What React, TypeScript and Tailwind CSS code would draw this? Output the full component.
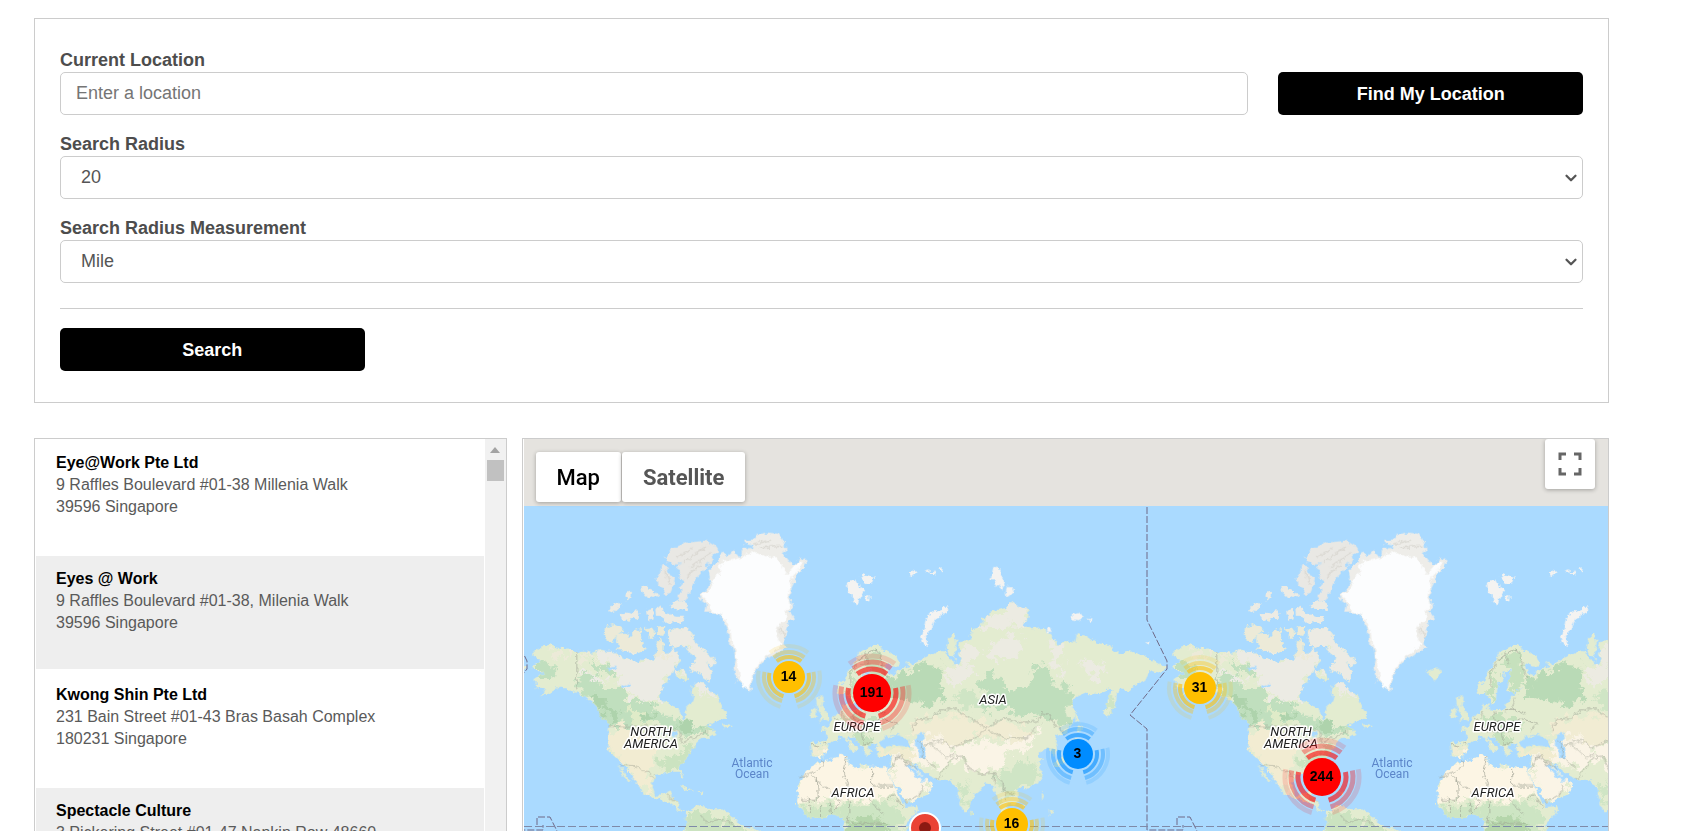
import { ChevronDown } from 'lucide-react'

type Patch = { dx?: number; dy?: number; d: string; fill?: string }

const stores = [
  { name: 'Eye@Work Pte Ltd', street: '9 Raffles Boulevard #01-38 Millenia Walk', city: '39596 Singapore' },
  { name: 'Eyes @ Work', street: '9 Raffles Boulevard #01-38, Milenia Walk', city: '39596 Singapore' },
  { name: 'Kwong Shin Pte Ltd', street: '231 Bain Street #01-43 Bras Basah Complex', city: '180231 Singapore' },
  { name: 'Spectacle Culture', street: '3 Pickering Street #01-47 Nankin Row 48660' },
]

const clusters = [
  { count: 14, x: 265, y: 238, color: '#ffbf00', r: 16, rings: [20, 25, 31], band: 4 },
  { count: 191, x: 348, y: 254, color: '#ff0000', r: 19, rings: [24, 31, 37], band: 5 },
  { count: 3, x: 554, y: 315, color: '#008cff', r: 15, rings: [19, 25, 30], band: 4 },
  { count: 16, x: 488, y: 385, color: '#ffbf00', r: 16, rings: [20, 25, 31], band: 4 },
  { count: 31, x: 676, y: 249, color: '#ffbf00', r: 16, rings: [20, 25, 31], band: 4 },
  { count: 244, x: 798, y: 338, color: '#ff0000', r: 19, rings: [24, 31, 37], band: 5 },
]

// Eurasia is plotted on its own grid, Europe and Africa on another
const EAST = { dx: 900, dy: 210 }
const EURO = { dx: 660, dy: 0 }

const land: Patch[] = [
  // North America
  { d: 'M45 660 62 648 90 640 112 650 140 652 165 662 190 660 215 668 240 655 262 662 285 668 305 682 330 688 355 690 375 685 400 690 425 688 440 680 448 665 460 650 470 668 480 690 470 700 462 715 455 730 440 738 450 745 435 755 425 770 420 790 422 808 438 815 455 822 475 830 482 850 490 866 500 850 498 830 515 815 520 800 515 785 518 765 530 755 550 758 560 770 572 785 590 790 600 815 610 835 622 850 610 862 590 870 575 880 560 884 580 895 590 910 570 920 548 920 535 930 520 945 515 960 505 968 498 985 480 1000 475 1012 482 1020 490 1035 494 1045 486 1042 475 1022 455 1022 440 1028 420 1025 405 1035 400 1055 398 1072 405 1090 415 1095 430 1092 440 1085 455 1078 450 1095 458 1100 470 1108 478 1118 480 1135 490 1145 505 1140 515 1135 530 1125 545 1128 570 1135 600 1135 625 1150 650 1165 660 1180 690 1190 720 1200 740 1230 480 1230 500 1180 498 1160 500 1147 485 1145 470 1130 450 1115 430 1108 415 1102 395 1100 370 1088 362 1070 355 1055 340 1040 325 1020 310 1005 300 990 285 975 270 965 265 945 262 920 265 900 270 880 255 870 240 850 230 830 215 812 195 795 180 790 160 780 145 775 125 775 110 765 100 778 80 790 60 800 70 790 78 775 50 772 50 755 40 745 55 735 75 730 60 722 40 715 35 700 60 695 50 680 35 670z' },
  { d: 'M295 1003 310 1018 335 1055 325 1050 305 1025z M598 850 615 844 620 862 600 868z M610 880 635 885 620 898z M478 1062 500 1068 522 1080 500 1076z M530 1079 550 1082 545 1088z' },
  // Arctic archipelago
  { d: 'M260 585 280 580 300 590 310 600 290 612 275 632 258 628 255 605z M290 610 320 605 330 620 345 600 365 595 362 620 370 650 380 655 355 665 340 670 325 660 310 658 290 655 300 640 285 628z M378 592 395 590 405 605 398 625 385 615z M412 590 435 588 432 605 425 615 412 608z M405 690 410 650 418 620 430 640 430 660 445 675 430 692z M465 720 485 712 500 730 508 750 490 748 470 742z' },
  { d: 'M445 600 460 592 480 598 500 590 515 610 520 630 545 650 560 665 585 685 580 710 570 700 560 695 575 720 575 740 570 752 545 735 530 720 515 722 510 705 525 695 530 680 510 665 500 645 480 645 465 650 450 640 445 620z' },
  { fill: '#ebeadf', d: 'M365 465 380 465 388 480 405 485 415 498 395 492 380 500 368 485z M320 488 335 482 333 500 322 510z M268 540 280 522 295 513 303 525 290 535 280 545z M300 548 320 545 335 550 345 535 358 548 352 565 335 560 325 572 310 565z M382 538 400 533 400 565 386 568z M410 528 430 535 440 548 465 555 490 555 495 568 475 575 445 572 430 565 412 555z M450 520 470 512 490 510 505 522 500 540 480 535 455 532z' },
  // Iceland, British Isles
  { ...EURO, d: 'M137 715 150 720 165 712 185 715 185 730 165 745 148 738 150 728z M230 800 248 800 245 825 262 850 265 865 238 874 245 850 235 835z M210 840 228 828 230 850 213 862z' },
  // Africa
  { ...EURO, d: 'M235 990 265 990 300 972 322 975 320 995 340 1010 355 1015 360 1000 390 1005 440 1010 448 1035 465 1070 480 1100 495 1128 535 1125 525 1150 500 1180 490 1230 315 1230 310 1160 280 1150 250 1160 220 1160 190 1145 170 1115 175 1095 172 1070 190 1035 215 1010z' },
  // Eurasia
  { ...EAST, d: 'M-25 765-28 725 5 722 20 715 18 690 0 685 22 675 35 660 50 640 65 630 70 605 82 610 85 625 105 628 135 625 135 612 155 590 165 580 190 560 160 575 140 565 145 535 152 525 155 505 135 515 130 535 115 550 110 580 105 605 92 615 85 585 78 580 55 585 50 560 70 540 85 510 100 490 115 455 135 445 155 435 175 435 200 450 230 470 240 490 220 500 195 485 205 515 225 525 225 510 250 500 265 495 260 480 280 490 305 475 330 462 345 455 370 450 385 465 400 490 410 490 402 465 385 455 380 440 390 405 405 400 410 430 405 460 412 495 425 480 415 450 420 420 435 415 450 420 455 385 480 380 485 355 520 330 560 320 575 300 595 315 625 325 625 350 605 375 640 385 670 380 690 400 715 430 735 420 765 425 770 400 800 405 830 425 870 435 880 450 900 460 925 450 960 460 985 470 1010 485 1040 500 1020 515 1000 510 985 520 975 540 945 555 925 570 900 565 890 580 888 610 865 650 852 640 860 600 880 565 870 560 840 580 800 575 765 590 755 605 765 640 760 660 735 700 712 700 705 720 712 750 702 768 690 740 670 745 655 760 668 775 655 795 668 820 655 845 620 862 595 860 590 870 597 895 585 915 565 905 560 930 575 960 580 1000 560 1000 545 950 540 920 530 880 520 855 495 850 480 870 455 890 448 920 435 935 420 905 412 870 405 850 385 838 355 835 330 825 300 800 275 785 285 805 300 820 320 835 342 855 320 880 275 905 255 903 240 870 215 835 205 810 210 790 215 765 180 765 165 745 175 735 150 730 145 740 150 758 138 768 130 740 110 720 90 705 80 712 105 735 112 742 100 755 85 725 65 705 52 708 48 718 30 725 25 745 10 765 0 775z' },
  { ...EAST, d: 'M765 633 772 640 775 665 766 655z M775 672 790 680 780 692 770 688z M755 740 765 710 775 712 765 755 735 785 705 800 700 790z M450 928 458 938 452 946z M665 870 672 885 666 900z M685 922 698 935 690 945z M600 912 612 912 606 922z' },
]

const ice: Patch[] = [
  // Ellesmere Island and Greenland
  { fill: '#e9e8e4', d: 'M435 378 455 355 480 345 500 335 530 332 560 330 585 345 595 360 580 375 565 400 550 420 530 440 520 460 510 480 500 505 480 510 470 495 485 485 480 465 490 450 475 440 480 420 465 410 485 400 460 400 440 392z M425 400 440 410 450 430 465 440 460 465 450 488 435 488 430 470 412 460 410 440 420 425z' },
  { fill: '#eeede9', d: 'M535 490 555 480 560 470 575 460 570 440 565 420 580 405 590 398 595 380 610 365 625 375 640 360 655 380 665 365 670 350 690 355 705 345 680 340 675 330 700 325 710 310 740 305 775 308 795 335 800 360 785 370 800 380 815 400 835 395 840 380 860 388 850 410 830 425 825 450 815 470 808 490 815 520 822 527 808 540 825 565 805 575 800 600 790 640 803 648 780 660 750 680 730 690 715 710 700 730 695 760 690 782 672 770 655 755 645 730 640 705 645 680 640 650 628 640 625 610 622 590 610 570 600 550 580 545 555 545 560 520 545 510z' },
  { fill: '#fcfdfe', d: 'M540 490 565 482 580 460 575 445 600 430 600 395 640 385 665 380 695 360 720 372 745 380 770 378 790 410 800 430 825 400 845 395 835 415 815 440 810 470 803 490 812 520 800 540 798 570 772 585 770 615 785 640 765 655 745 675 725 690 700 720 690 760 685 775 665 765 655 730 650 690 645 650 635 635 632 600 615 565 600 548 570 540 565 515z' },
  { ...EURO, fill: '#f4f3f1', d: 'M320 455 345 445 355 465 372 478 360 495 352 525 340 510 338 490 325 485z M358 440 370 430 405 440 400 452 380 460 365 450z M375 495 388 492 388 508 377 508z M508 430 525 416 532 425 515 434z M553 420 567 415 570 422z M570 425 585 418 582 432z M596 415 608 408 606 425z M628 525 620 540 595 555 580 575 568 600 558 615 562 645 548 640 540 620 552 590 558 565 575 545 600 535z' },
  { ...EAST, fill: '#f4f3f1', d: 'M518 205 530 193 542 210 540 225 550 235 555 250 545 265 530 250 525 235 512 235z M560 258 575 258 582 270 565 287 557 280z M755 340 775 333 795 348 775 358 757 355z M803 350 822 355 808 360z M976 424 992 425 988 433 978 432z M680 385 690 380 695 395 685 396z' },
]

const terrain: Patch[] = [
  // tundra
  { fill: '#ecebe4', d: 'M235 655 300 660 370 680 480 640 475 720 430 760 420 820 370 815 340 790 310 770 290 730 260 700z M500 700 560 740 585 790 560 800 520 770z M430 570 520 580 600 690 580 770 520 730 500 650 430 655z M180 720 235 725 262 755 245 770 210 760z M250 450 520 450 520 590 250 590z' },
  { fill: '#ecead8', d: 'M240 570 440 570 440 680 300 665 240 640z M150 655 195 655 240 690 215 690z M100 655 150 665 135 680 90 680z' },
  // boreal forest
  { fill: '#c0dfbe', d: 'M170 735 205 725 215 760 260 775 300 765 330 800 380 815 430 845 480 875 540 880 580 885 585 905 540 900 500 920 460 900 430 880 380 885 330 880 300 905 270 885 235 850 215 800 180 780z M55 700 95 690 110 720 90 745 50 740z M205 700 265 705 280 735 230 725z' },
  { fill: '#aed3ac', d: 'M215 790 250 800 300 850 290 880 265 860 240 845z M360 835 400 845 400 865 370 860z M470 880 540 885 530 900 490 900z' },
  { fill: '#dfebc8', d: 'M320 840 360 835 370 875 400 880 410 900 330 890z' },
  // western plains and Mexico
  { fill: '#f2ecd2', d: 'M275 890 330 890 400 905 415 950 400 1000 385 1030 392 1085 370 1080 340 1030 300 985 268 950z' },
  { fill: '#cbe3c0', d: 'M425 985 460 985 495 950 530 930 520 960 490 1000 460 1015 420 1015z M500 1150 540 1140 580 1160 640 1165 700 1230 490 1230z' },
  // Russia
  { ...EAST, fill: '#ecebe2', d: 'M480 370 560 320 580 300 630 330 620 370 560 375 500 390z M560 400 610 410 605 450 560 475 520 480 500 450z M690 400 730 440 720 490 740 540 700 500z M420 440 470 430 480 460 430 500z M370 500 440 490 460 520 400 560z M780 480 830 470 860 510 820 540z' },
  { ...EAST, fill: '#b9dab6', d: 'M215 530 245 515 300 495 330 500 350 490 370 520 365 560 380 580 340 610 325 635 300 600 270 605 230 600 190 590 200 560z' },
  { ...EAST, fill: '#bfdebc', d: 'M480 530 520 520 545 535 560 570 610 560 640 520 680 490 690 540 720 560 750 560 760 590 740 620 750 660 720 680 690 650 640 640 600 650 560 620 500 630 470 600 500 580z M640 500 670 480 690 520 650 540z M590 590 640 585 630 640 590 640z' },
  { ...EAST, fill: '#cfe5c5', d: 'M400 590 470 580 480 620 430 630z M850 600 880 580 880 620 862 645z M540 800 640 780 665 810 650 850 600 865 560 900 530 850z M410 850 440 840 450 900 435 930z' },
  // central Asian steppe and plateau
  { ...EAST, fill: '#f1ecd3', d: 'M270 690 290 660 350 650 400 640 450 650 510 670 560 660 640 690 600 730 540 710 470 700 420 740 400 760 300 720z' },
  { ...EAST, fill: '#faf4e6', d: 'M290 720 360 700 400 740 440 730 520 720 600 720 660 680 650 720 600 750 540 760 550 800 500 820 440 800 400 760 380 800 350 800 300 790 270 760z M215 770 260 770 280 800 320 840 340 855 275 900 240 860z' },
  { ...EAST, fill: '#f1ecd0', d: 'M160 740 215 735 280 750 270 775 200 765z' },
  // Scandinavia and the rest of Europe
  { ...EURO, fill: '#c6e1bd', d: 'M375 665 410 660 430 700 430 760 395 785 375 770 395 710 370 700z M325 740 350 730 352 790 335 825 325 790z M300 855 380 850 430 880 380 900 320 880z M330 900 390 905 385 960 360 930z' },
  { ...EURO, fill: '#f0ecd2', d: 'M225 940 255 945 250 975 225 975z' },
  // Sahara
  { ...EURO, fill: '#fcf5e4', d: 'M150 1110 180 1020 250 970 330 955 345 1000 450 990 495 1100 440 1095 380 1110 300 1115 230 1110z' },
  { ...EURO, fill: '#cde5c3', d: 'M170 1125 230 1125 300 1125 370 1120 440 1110 480 1140 500 1175 470 1230 315 1230 310 1155 200 1160z' },
  { ...EURO, fill: '#b5d6ab', d: 'M340 1165 400 1160 440 1180 430 1230 315 1230 320 1180z' },
]

const water: Patch[] = [
  { d: 'M262 710 285 704 290 712 268 718z M305 765 330 755 330 766 310 772z M425 905 445 895 470 905 465 918 440 912z' },
  { ...EURO, d: 'M418 935 435 912 455 922 472 908 480 918 505 932 515 948 480 945 455 942 430 950z M528 915 548 905 555 918 543 935 556 955 556 985 538 980 536 958 524 940z M445 918 458 908 466 912z M500 1000 515 1005 535 1030 560 1040 580 1040 550 1050 525 1035z' },
]

const borders: Patch[] = [
  { d: 'M170 662 170 775 M265 886 400 886 455 890 480 905 485 935 520 920 550 905 565 900 M300 1002 345 1005 365 1020 385 1022 402 1040 M440 1090 455 1105 470 1110 M540 1150 560 1175 600 1165 640 1180' },
  { ...EURO, d: 'M385 700 375 665 410 655 425 690 440 745 M335 770 330 730 350 690 385 665 M390 840 405 800 M340 840 345 870 390 880 420 860 470 880 450 900 M285 860 320 900 370 900 400 905 M300 860 310 840 M375 840 405 835 435 850 M365 900 370 940 395 935 M250 935 265 940 M215 940 235 945' },
  { ...EURO, d: 'M245 985 250 1005 215 1030 175 1040 M215 1035 270 1080 300 1110 M320 975 310 1030 325 1055 320 1085 M395 1010 395 1065 460 1065 M232 1040 235 1105 180 1105 M205 1100 215 1150 M240 1110 245 1150 M270 1110 275 1150 M300 1110 285 1140 M325 1080 330 1140 320 1175 M395 1070 390 1110 430 1150 M440 1110 460 1090 490 1130 M330 1175 440 1180' },
  { ...EAST, d: 'M275 690 290 655 340 650 360 630 400 620 430 640 460 655 500 680 470 710 420 730 400 740 360 715 310 735 M505 680 550 650 600 665 655 660 665 635 690 640 700 670 730 690 M505 690 560 715 620 710 660 670 M300 720 310 770 345 800 M330 730 380 770 400 760 M400 770 350 835 M400 770 430 765 445 800 480 820 520 815 545 840 555 870 580 880 M520 815 525 850 M545 850 560 900 M210 800 240 760 260 790 290 800 M225 765 275 790 M255 905 300 880 310 850' },
]

const Shapes = ({ items, fill }: { items: Patch[]; fill?: string }) => (
  <>
    {items.map((p, i) => (
      <path key={i} d={p.d} fill={p.fill ?? fill} transform={`translate(${p.dx ?? 0} ${p.dy ?? 0})`} />
    ))}
  </>
)

const MAP_LABELS = [
  { text: 'NORTH', x: 127, y: 297 },
  { text: 'AMERICA', x: 127, y: 309 },
  { text: 'EUROPE', x: 333, y: 292 },
  { text: 'AFRICA', x: 329, y: 358 },
  { text: 'ASIA', x: 469, y: 265 },
]

function World() {
  return (
    <svg className="absolute inset-0 h-full w-full" role="img" aria-label="World map">
      <defs>
        <clipPath id="land-clip">
          <Shapes items={land} />
        </clipPath>
        <filter id="rough" x="-2%" y="-2%" width="104%" height="104%" colorInterpolationFilters="sRGB">
          <feTurbulence type="fractalNoise" baseFrequency="0.06" numOctaves="3" seed="4" result="noise" />
          <feDisplacementMap in="SourceGraphic" in2="noise" scale="20" xChannelSelector="R" yChannelSelector="G" />
        </filter>
        <filter id="patchy" x="-2%" y="-2%" width="104%" height="104%" colorInterpolationFilters="sRGB">
          <feTurbulence type="fractalNoise" baseFrequency="0.035" numOctaves="4" seed="9" result="noise" />
          <feDisplacementMap in="SourceGraphic" in2="noise" scale="70" xChannelSelector="R" yChannelSelector="G" />
        </filter>
        <g id="world">
          <g transform="translate(-4 -8) scale(0.33333)">
            <g filter="url(#rough)">
              <Shapes items={land} fill="#e3ecd0" />
              <g clipPath="url(#land-clip)">
                <g filter="url(#patchy)">
                  <Shapes items={terrain} />
                </g>
              </g>
              <Shapes items={ice} />
              <Shapes items={water} fill="#aadaff" />
              <g stroke="#d9d7d1" strokeWidth="4" fill="none">
                <path d="M470 380 520 350 M490 395 560 345 M510 410 575 365 M500 440 540 400 M435 420 450 460 M700 340 760 325 M720 350 790 345 M780 590 795 620" />
              </g>
            </g>
            <g fill="none" stroke="#9a9d90" strokeWidth="2" strokeLinejoin="round" filter="url(#rough)">
              {borders.map((b, i) => (
                <path key={i} d={b.d} transform={`translate(${b.dx ?? 0} ${b.dy ?? 0})`} />
              ))}
            </g>
          </g>
          <path
            d="M623 68 V181 L643 222 V230 L606 276 L623 290 V391 H659 V386 M653 386 V378 H666 L675 396"
            fill="none"
            stroke="#6f6987"
            strokeDasharray="7 2"
          />
          <g fontFamily="Roboto, sans-serif" textAnchor="middle">
            <g fontSize="13" fontStyle="italic" fill="#222" stroke="#fff" strokeWidth="3" strokeLinejoin="round" paintOrder="stroke">
              {MAP_LABELS.map((l) => (
                <text key={l.text} x={l.x} y={l.y}>{l.text}</text>
              ))}
            </g>
            <g fontSize="12" fill="#5b85c9">
              <text x="228" y="328">Atlantic</text>
              <text x="228" y="339">Ocean</text>
            </g>
          </g>
        </g>
      </defs>
      <rect y="67" width="100%" height="100%" fill="#aadaff" />
      <use href="#world" x="-640" />
      <use href="#world" />
      <use href="#world" x="640" />
      <line x1="0" x2="100%" y1="387.5" y2="387.5" stroke="#7f8aa8" strokeDasharray="8 3" />
    </svg>
  )
}

function arc(radius: number, from: number, to: number) {
  const point = (deg: number) => {
    const rad = (deg * Math.PI) / 180
    return `${radius * Math.cos(rad)} ${radius * Math.sin(rad)}`
  }
  return `M${point(from)} A${radius} ${radius} 0 0 1 ${point(to)}`
}

function Cluster({ count, x, y, color, r, rings, band }: (typeof clusters)[number]) {
  return (
    <button
      type="button"
      className="absolute flex size-20 -translate-x-1/2 -translate-y-1/2 items-center justify-center pb-0.5 text-sm font-bold text-black"
      style={{ left: x, top: y }}
    >
      <svg className="absolute inset-0 size-full" viewBox="-40 -40 80 80" aria-hidden="true">
        {rings.map((ring, i) => (
          <path
            key={ring}
            d={arc(ring, -128, -52) + arc(ring, -12, 74) + arc(ring, 106, 192)}
            fill="none"
            stroke={color}
            strokeWidth={band}
            opacity={[0.6, 0.34, 0.14][i]}
          />
        ))}
        <circle r={r} fill={color} />
      </svg>
      <span className="relative">{count}</span>
    </button>
  )
}

function SelectField({ id, label, options }: { id: string; label: string; options: string[] }) {
  return (
    <div>
      <label htmlFor={id} className="block pt-1 font-bold leading-[23px]">{label}</label>
      <div className="relative">
        <select id={id} className="block h-[43px] w-full appearance-none rounded-[5px] border border-[#ccc] bg-white px-5 pb-0.5 text-[#555]">
          {options.map((o) => (
            <option key={o}>{o}</option>
          ))}
        </select>
        <ChevronDown className="pointer-events-none absolute top-[13px] right-[3px] size-[18px] text-[#555]" strokeWidth={3} />
      </div>
    </div>
  )
}

function SearchForm() {
  return (
    <form className="shrink-0 border border-[#ccc] px-[25px] pt-[26px] pb-[31px] text-lg text-[#4d4d4d]">
      <div className="space-y-3.5">
        <div className="flex items-end gap-[30px]">
          <div className="flex-1">
            <label htmlFor="location" className="block pt-1 font-bold leading-[23px]">Current Location</label>
            <input
              id="location"
              type="text"
              placeholder="Enter a location"
              className="block h-[43px] w-full rounded-[5px] border border-[#ccc] px-[15px] placeholder:text-[#757575]"
            />
          </div>
          <button type="button" className="h-[43px] w-1/5 rounded-[5px] bg-black font-bold text-white">
            Find My Location
          </button>
        </div>
        <SelectField id="radius" label="Search Radius" options={['20', '50', '100']} />
        <SelectField id="unit" label="Search Radius Measurement" options={['Mile', 'Kilometer']} />
      </div>
      <hr className="mt-[25px] mb-[19px] border-[#ccc]" />
      <button type="submit" className="block h-[43px] w-1/5 rounded-[5px] bg-black font-bold text-white">
        Search
      </button>
    </form>
  )
}

function StoreList() {
  return (
    <div className="flex w-[30%] border border-b-0 border-[#ccc]">
      <ul className="min-w-0 flex-1 space-y-[3px] overflow-hidden px-px pt-px">
        {stores.map((s) => (
          <li key={s.name} className="h-[113px] px-5 pt-3 text-base leading-[22px] text-[#5a5a5a] even:bg-[#eee]">
            <h2 className="font-bold text-black">{s.name}</h2>
            <p>{s.street}</p>
            <p>{s.city}</p>
          </li>
        ))}
      </ul>
      <div className="flex w-[21px] flex-col items-center bg-[#f1f1f1] pt-2" aria-hidden="true">
        <svg className="h-[6px] w-[10px]" viewBox="0 0 10 6">
          <path d="M0 6 5 0 10 6z" fill="#a3a3a3" />
        </svg>
        <div className="mt-[7px] h-[21px] w-[17px] bg-[#c1c1c1]" />
      </div>
    </div>
  )
}

function MapPanel() {
  return (
    <div className="min-w-0 flex-1 border border-b-0 border-[#ccc] pl-px">
      <div className="relative h-full overflow-hidden bg-[#e5e3df]">
        <World />
        {clusters.map((c) => (
          <Cluster key={c.count} {...c} />
        ))}
        <button
          type="button"
          aria-label="Selected store"
          className="absolute top-[373px] left-[385px] flex size-8 items-center justify-center rounded-full border-2 border-white bg-[#ea4335]"
        >
          <span className="size-3 rounded-full bg-[#8c1a13]" />
        </button>

        <div className="absolute top-[13px] left-3 flex gap-px font-[Roboto] text-[22px]">
          <button type="button" className="h-[50px] rounded-[3px] bg-white px-[21px] font-medium text-black shadow-[0_1px_4px_rgba(0,0,0,0.3)]">Map</button>
          <button type="button" className="h-[50px] rounded-[3px] bg-white px-[21px] font-bold text-[#565656] shadow-[0_1px_4px_rgba(0,0,0,0.3)]">Satellite</button>
        </div>
        <button
          type="button"
          aria-label="Toggle fullscreen view"
          className="absolute top-0 right-[13px] flex size-[50px] items-center justify-center rounded-[3px] bg-white shadow-[0_1px_4px_rgba(0,0,0,0.3)]"
        >
          <svg className="size-6" viewBox="0 0 24 24" fill="none" stroke="#666" strokeWidth="3">
            <path d="M2 8V2H8 M16 2H22V8 M22 16V22H16 M8 22H2V16" />
          </svg>
        </button>
      </div>
    </div>
  )
}

export default function App() {
  return (
    <div className="flex h-screen flex-col gap-[35px] overflow-hidden bg-white pt-[18px] pr-[97px] pl-[34px] font-['Liberation_Sans',Arial,sans-serif]">
      <SearchForm />
      <div className="flex min-h-0 flex-1 gap-[15px]">
        <StoreList />
        <MapPanel />
      </div>
    </div>
  )
}
